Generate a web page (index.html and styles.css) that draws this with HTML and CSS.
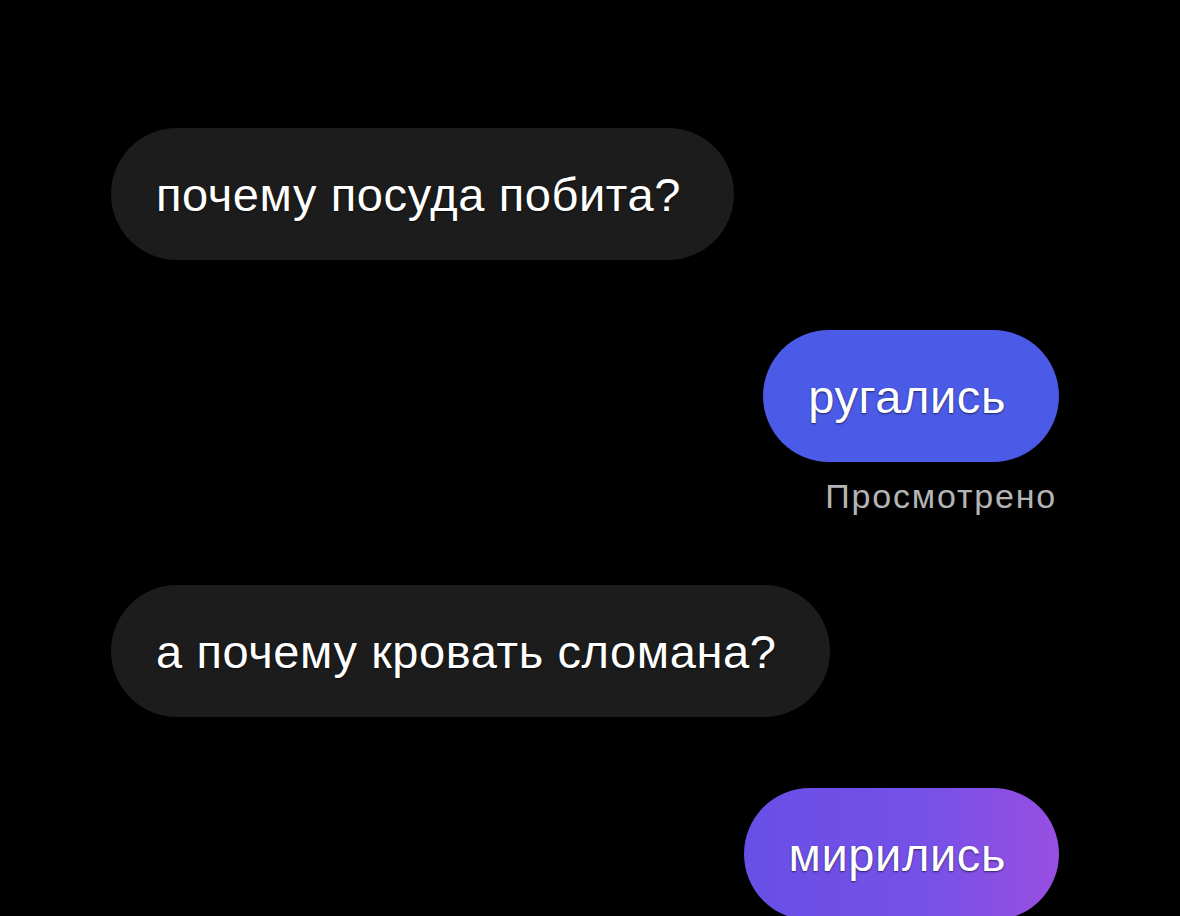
FILE: index.html
```html
<!DOCTYPE html>
<html lang="ru">
<head>
  <meta charset="UTF-8" />
  <meta name="viewport" content="width=device-width, initial-scale=1.0" />
  <title>переписка</title>
  <link rel="stylesheet" href="styles.css">
</head>
<body>
  <main class="chat">
    <div class="msg in">почему посуда побита?</div>
    <div class="msg out blue">ругались</div>
    <p class="seen">Просмотрено</p>
    <div class="msg in later">а почему кровать сломана?</div>
    <div class="msg out violet">мирились</div>
  </main>
</body>
</html>
```

FILE: styles.css
```css
html, body {
  margin: 0;
  height: 100%;
  background: #000;
  overflow: hidden;
}
body {
  font-family: "Liberation Sans", Arial, sans-serif;
  color: #fff;
}
.chat {
  display: flex;
  flex-direction: column;
  padding: 128px 121px 0 111px;
}
.msg {
  height: 132px;
  display: flex;
  align-items: center;
  padding: 0 53px 0 45px;
  border-radius: 66px;
  font-size: 47px;
  letter-spacing: 0.6px;
  text-shadow: 0 1px 2px rgba(0,0,0,0.6);
  box-sizing: border-box;
}
.in {
  align-self: flex-start;
  background: #1c1c1c;
}
.out {
  align-self: flex-end;
  margin-top: 70px;
}
.blue {
  background: #4b5be7;
}
.violet {
  background: linear-gradient(90deg, #684fe6 0%, #7551e8 55%, #984fe1 100%);
  margin-top: 71px;
}
.seen {
  align-self: flex-end;
  margin: 16px 2px 0 0;
  font-size: 34px;
  line-height: 36px;
  color: #b4b4b4;
  letter-spacing: 1.8px;
}
.later {
  margin-top: 71px;
}
```
